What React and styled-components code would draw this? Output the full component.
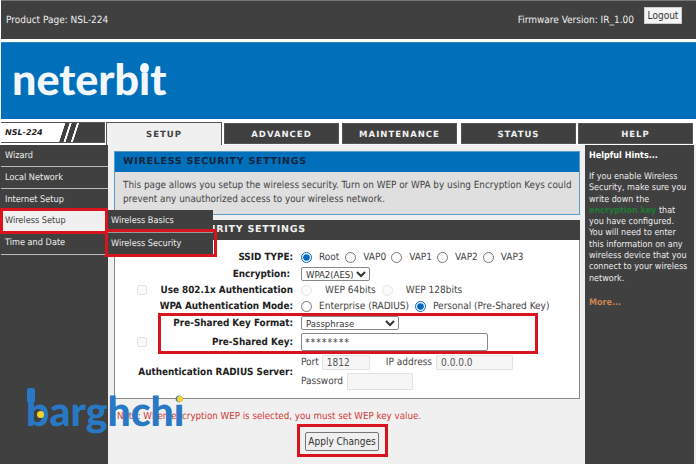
import React from "react";
import styled, { createGlobalStyle } from "styled-components";

const Global = createGlobalStyle`
  html, body { margin: 0; padding: 0; background: #f0f0f0; overflow: hidden; text-rendering: geometricPrecision; }
  #root { width: 696px; height: 464px; }
`;
const body = `"DejaVu Sans Condensed", "DejaVu Sans", sans-serif`;
const Page = styled.div`
  position: relative; width: 696px; height: 464px; overflow: hidden;
  display: flex; flex-direction: column; background: #fff;
  font-family: ${body}; font-size: 10px; color: #404040;
`;
const TopBar = styled.header`
  height: 38px; margin-left: 1px; border-top: 1px solid #777; background: #404040; color: #eee;
  display: flex; align-items: center; padding: 0 14px 0 5px; font-size: 10px;
`;
const Firmware = styled.span` margin-left: auto; margin-right: 10px; `;
const Logout = styled.button`
  width: 38px; height: 17px; margin-top: -10px; padding: 0; border: 1px solid #ccc; background: #f4f4f4;
  color: #333; font: 10px ${body};
`;
const Banner = styled.div`
  position: relative; height: 76px; margin: 3px 0 3px 1px; background: #0070bb; border-top: 1px solid #2a85c4;
`;
const LogoText = styled.span`
  position: absolute; left: 11px; top: 7px; color: #f2f7fb; font: 900 43px/60px "Lato", sans-serif;
`;
const LogoDot = styled.i`
  position: absolute; left: 139px; top: 21px; width: 9px; height: 9px; border-radius: 50%; background: #f2f7fb;
`;
const TabRow = styled.nav`
  display: flex; height: 23px; padding-left: 1px; background: #fff;
`;
const ModelTab = styled.div`
  width: 104px; height: 21px; border: 1px solid #555; border-left: 0; box-sizing: border-box;
  background: linear-gradient(108deg, #fff 0 61px, #404040 61.5px 65px, #fff 65.5px 67px, #404040 67.5px 72px, #fff 72.5px 74px, #404040 74.5px);
  font: italic 700 8px/20px "DejaVu Sans", sans-serif; color: #222; padding-left: 4px; margin-right: 1px;
`;
const Tab = styled.div`
  box-sizing: border-box; width: ${p => p.$w}px; margin-right: ${p => p.$gap}px;
  height: ${p => (p.$active ? 23 : 21)}px; margin-top: ${p => (p.$active ? 0 : 1)}px;
  background: ${p => (p.$active ? "#f0f0f0" : "#404040")};
  color: ${p => (p.$active ? "#404040" : "#f0f0f0")};
  border: 1px solid #555; border-bottom: ${p => (p.$active ? 0 : 1)}px solid #555;
  font: 700 8.5px/${p => (p.$active ? 24 : 22)}px "DejaVu Sans", sans-serif; letter-spacing: 1px; text-align: center;
`;
const Main = styled.div`
  flex: 1; display: grid; grid-template-columns: 108px 477px 109px; background: #f0f0f0; min-height: 0;
`;
const Sidebar = styled.aside`
  padding: 1px 0 0 1px; background: #404040; display: flex; flex-direction: column;
`;
const SideItem = styled.div`
  height: ${p => p.$h}px; line-height: ${p => p.$lh || p.$h}px; padding-left: 4px; margin-bottom: ${p => p.$mb ?? 2}px;
  background: ${p => (p.$active ? "#f0f0f0" : "#404040")}; color: ${p => (p.$active ? "#404040" : "#eee")};
  box-shadow: 0 1px 0 ${p => (p.$active ? "transparent" : "#bbb")}; font-size: 9.1px;
`;
const Center = styled.section`
  padding: 6px 5px 0 6px; display: flex; flex-direction: column;
`;
const InfoPanel = styled.div`
  height: 64px; box-sizing: border-box; border: 1px solid #5b9bc8; background: #dfdfdf; margin-bottom: 5px;
`;
const Head = styled.h2`
  margin: 0; height: ${p => p.$h}px; padding-left: ${p => p.$pad}px;
  background: ${p => p.$bg}; color: ${p => p.$fg}; font: 700 9.5px/${p => p.$h}px "DejaVu Sans", sans-serif; letter-spacing: 0.72px;
`;
const InfoText = styled.p`
  margin: 7px 0 0 8px; font-size: 9.85px; line-height: 13.5px; width: 452px; color: #444;
`;
const FormPanel = styled.div`
  height: 159px; box-sizing: border-box; border: 1px solid #888; border-top: 0; background: #fff;
  display: flex; flex-direction: column;
`;
const FormBody = styled.div` padding-top: 9px; `;
const Row = styled.div`
  display: grid; grid-template-columns: 10px 146px 1fr; align-items: center; padding-left: 22px;
  height: ${p => p.$h}px;
`;
const Label = styled.div`
  grid-column: 2; justify-self: end; white-space: nowrap; font: 700 9.85px ${body}; color: #222;
  margin-right: ${p => p.$mr || 0}px;
`;
const Box = styled.input.attrs({ type: "checkbox", disabled: true })`
  margin: 0; width: 10px; height: 10px; grid-column: 1; opacity: 0.6;
`;
const Control = styled.div`
  grid-column: 3; display: flex; align-items: center; padding-left: 8px; font-size: 10px; color: #444; white-space: nowrap;
`;
const Radio = styled.input.attrs({ type: "radio" })`
  margin: 0 ${p => p.$gap ?? 6}px 0 0; width: 11px; height: 11px; accent-color: #0067c0;
  opacity: ${p => (p.disabled ? 0.5 : 1)};
`;
const Opt = styled.span` margin-right: ${p => p.$mr}px; `;
const Select = styled.select`
  width: ${p => p.$w}px; height: 14px; padding: 0; margin: 0; font: 9.5px ${body}; color: #333; background: #fff;
  border: 1px solid #888; border-radius: 2px; box-sizing: border-box;
`;
const KeyInput = styled.input`
  width: 187px; height: 18px; box-sizing: border-box; border: 1px solid #888; border-radius: 2px; padding: 0 3px; margin: 0;
  font: 10.5px ${body}; color: #444; letter-spacing: 0.9px;
`;
const RadiusGrid = styled.div`
  display: flex; flex-direction: column; gap: 3px;
`;
const RadiusLine = styled.div` display: flex; align-items: center; gap: 3px; font-size: 10px; color: #444; height: 16px; `;
const RadiusInput = styled.input`
  width: ${p => p.$w}px; height: ${p => p.$h}px; box-sizing: border-box; border: 1px solid #e2e2e2; background: #f6f6f6; padding: 0 4px; margin: 0 ${p => p.$mr || 0}px 0 ${p => p.$ml || 0}px;
  font: 10px ${body}; color: #555; border-radius: 1px;
`;
const Note = styled.p`
  margin: 11px 0 0 3px; color: #cf3a3a; font-size: 9.7px; line-height: 14px; white-space: nowrap;
`;
const ApplyWrap = styled.div` display: flex; padding: 8px 0 0 191px; `;
const Apply = styled.button`
  width: 74px; height: 19px; padding: 0; border: 1px solid #777; border-radius: 2px; background: #efefef; color: #333; font: 10px ${body}; white-space: nowrap;
`;
const Hints = styled.aside`
  height: 320px; background: #404040; color: #ececec; padding: 4px 0 0 4px; font-size: 8.95px; line-height: 11.3px; box-sizing: border-box; width: 109px;
`;
const HintTitle = styled.div` font: 700 9px/14px ${body}; margin-bottom: 9px; color: #fff; `;
const HintText = styled.div` width: 100px; `;
const Green = styled.b` color: #1f7a34; `;
const More = styled.div` margin-top: 13px; font-weight: 700; color: #c98452; `;
const Submenu = styled.div`
  position: absolute; left: 108px; top: 210px; width: 105px; height: 46px; background: #404040; color: #eee; font-size: 9.1px;
  box-shadow: 0 1px 0 #bbb;
`;
const SubItem = styled.div`
  height: 23px; line-height: 22px; padding-left: 3px;
  border-bottom: ${p => (p.$line ? "1px solid #999" : 0)}; box-sizing: border-box;
`;
const Highlight = styled.div`
  position: absolute; left: ${p => p.$x}px; top: ${p => p.$y}px; width: ${p => p.$w}px; height: ${p => p.$h}px;
  box-sizing: border-box; border: 3px solid #d9141f; pointer-events: none;
`;
const Watermark = styled.div`
  position: absolute; left: 26px; top: 381px; width: 165px; height: 60px; color: #2878c4;
  font: 900 41px/60px "Lato", sans-serif; pointer-events: none;
`;
const Plug = styled.i`
  position: absolute; left: 1px; top: 7px; width: 8px; height: 14px; border-radius: 2px 2px 0 0; background: #2878c4;
`;
const YellowDot = styled.i`
  position: absolute; left: ${p => p.$x}px; top: ${p => p.$y}px; width: ${p => p.$s}px; height: ${p => p.$s}px; border-radius: 50%; background: #f7d428;
`;

export default function App() {
  return (
    <Page>
      <Global />
      <TopBar>
        <span>Product Page: NSL-224</span>
        <Firmware>Firmware Version: IR_1.00</Firmware>
        <Logout>Logout</Logout>
      </TopBar>
      <Banner>
        <LogoText>neterbit</LogoText>
        <LogoDot />
      </Banner>
      <TabRow>
        <ModelTab>NSL-224</ModelTab>
        <Tab $active $w={116} $gap={2}>SETUP</Tab>
        <Tab $w={115} $gap={3}>ADVANCED</Tab>
        <Tab $w={115} $gap={4}>MAINTENANCE</Tab>
        <Tab $w={115} $gap={2}>STATUS</Tab>
        <Tab $w={115} $gap={0}>HELP</Tab>
      </TabRow>
      <Main>
        <Sidebar>
          <SideItem $h={20}>Wizard</SideItem>
          <SideItem $h={20} $lh={21}>Local Network</SideItem>
          <SideItem $h={20} $lh={21} $mb={1}>Internet Setup</SideItem>
          <SideItem $h={22} $lh={21} $mb={1} $active>Wireless Setup</SideItem>
          <SideItem $h={20} $lh={19}>Time and Date</SideItem>
        </Sidebar>
        <Center>
          <InfoPanel>
            <Head $h={20} $pad={8} $bg="#0070bb" $fg="#14243c">WIRELESS SECURITY SETTINGS</Head>
            <InfoText>This page allows you setup the wireless security. Turn on WEP or WPA by using Encryption Keys could prevent any unauthorized access to your wireless network.</InfoText>
          </InfoPanel>
          <Head $h={20} $pad={8} $bg="#404040" $fg="#f0f0f0">WIRELESS SECURITY SETTINGS</Head>
          <FormPanel>
            <FormBody>
              <Row $h={17}>
                <Label>SSID TYPE:</Label>
                <Control>
                  <Radio name="ssid" defaultChecked $gap={7} /><Opt $mr={6}>Root</Opt>
                  <Radio name="ssid" $gap={7} /><Opt $mr={5}>VAP0</Opt>
                  <Radio name="ssid" $gap={7} /><Opt $mr={5}>VAP1</Opt>
                  <Radio name="ssid" $gap={7} /><Opt $mr={5}>VAP2</Opt>
                  <Radio name="ssid" $gap={7} /><Opt $mr={0}>VAP3</Opt>
                </Control>
              </Row>
              <Row $h={16}>
                <Label $mr={3}>Encryption:</Label>
                <Control>
                  <Select $w={69} defaultValue="WPA2(AES)"><option>WPA2(AES)</option></Select>
                </Control>
              </Row>
              <Row $h={16}>
                <Box />
                <Label>Use 802.1x Authentication</Label>
                <Control>
                  <Radio name="wep" disabled $gap={13} /><Opt $mr={6}>WEP 64bits</Opt>
                  <Radio name="wep" disabled $gap={13} /><Opt $mr={0}>WEP 128bits</Opt>
                </Control>
              </Row>
              <Row $h={16}>
                <Label>WPA Authentication Mode:</Label>
                <Control>
                  <Radio name="mode" $gap={7} /><Opt $mr={6}>Enterprise (RADIUS)</Opt>
                  <Radio name="mode" defaultChecked $gap={7} /><Opt $mr={0}>Personal (Pre-Shared Key)</Opt>
                </Control>
              </Row>
              <Row $h={18}>
                <Label>Pre-Shared Key Format:</Label>
                <Control>
                  <Select $w={98} defaultValue="Passphrase"><option>Passphrase</option></Select>
                </Control>
              </Row>
              <Row $h={20}>
                <Box />
                <Label>Pre-Shared Key:</Label>
                <Control>
                  <KeyInput defaultValue="********" readOnly />
                </Control>
              </Row>
              <Row $h={40}>
                <Label>Authentication RADIUS Server:</Label>
                <Control>
                  <RadiusGrid>
                    <RadiusLine>
                      Port <RadiusInput $w={48} $h={15} $mr={13} defaultValue="1812" readOnly />
                      IP address <RadiusInput $w={77} $h={15} $ml={1} defaultValue="0.0.0.0" readOnly />
                    </RadiusLine>
                    <RadiusLine>
                      Password <RadiusInput $w={66} $h={17} $ml={1} readOnly />
                    </RadiusLine>
                  </RadiusGrid>
                </Control>
              </Row>
            </FormBody>
          </FormPanel>
          <Note>Note: When encryption WEP is selected, you must set WEP key value.</Note>
          <ApplyWrap><Apply>Apply Changes</Apply></ApplyWrap>
        </Center>
        <Hints>
          <HintTitle>Helpful Hints...</HintTitle>
          <HintText>If you enable Wireless Security, make sure you write down the <Green>encryption key</Green> that you have configured. You will need to enter this information on any wireless device that you connect to your wireless network.</HintText>
          <More>More...</More>
        </Hints>
      </Main>
      <Submenu>
        <SubItem $line>Wireless Basics</SubItem>
        <SubItem>Wireless Security</SubItem>
      </Submenu>
      <Highlight $x={0} $y={208} $w={108} $h={26} />
      <Highlight $x={105} $y={229} $w={112} $h={28} />
      <Highlight $x={158} $y={313} $w={380} $h={41} />
      <Highlight $x={297} $y={424} $w={91} $h={33} />
      <Watermark>
        barghchi
        <Plug />
        <YellowDot $x={11} $y={30} $s={7} />
        <YellowDot $x={151} $y={15} $s={6} />
      </Watermark>
    </Page>
  );
}
